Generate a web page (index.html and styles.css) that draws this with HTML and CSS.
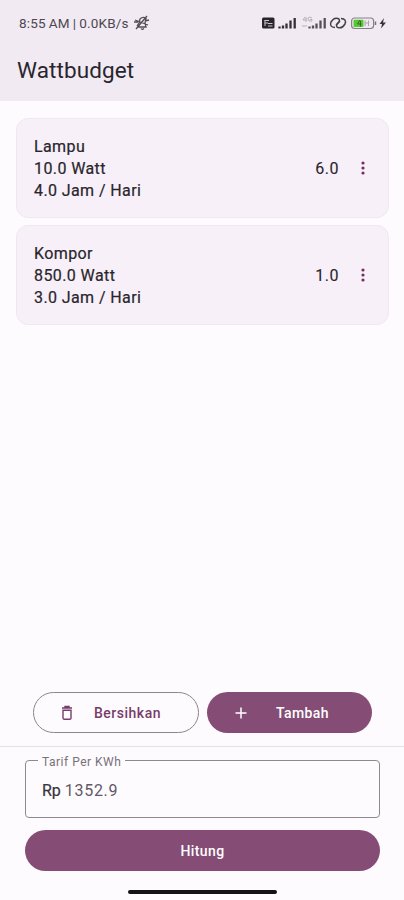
FILE: index.html
```html
<!DOCTYPE html>
<html lang="id">
<head>
<meta charset="utf-8">
<title>Wattbudget</title>
<link rel="stylesheet" href="styles.css">
</head>
<body>
<header class="top">
  <div class="status">
    <span class="clock">8:55 AM | 0.0KB/s</span>
    <svg class="mute" width="17" height="16" viewBox="0 0 17 16" fill="none" stroke="#514c55" stroke-width="1.300"><path d="M4 11L6 8L7 4Q10 1 13 3.500L12 8L13 12H5M8 13.500Q9 15 11 13.500M2 5L15 10M14 1L3 14M1 7H5M12 6L16 5"/></svg>
    <svg class="signals" width="126" height="16" viewBox="0 0 126 16">
      <rect x="0" y="2.500" width="12.500" height="11" rx="1.500" fill="#28252b"/>
      <path d="M2.500 5.500H7M2.500 8H6M3 5V11M6 8.500H10.500M6 11H10.500" stroke="#c9c3cb" fill="none"/>
      <path d="M17.500 13.500V11.500M21 13.500V10.500M24.500 13.500V8.500M28.500 13.500V5.500M32.700 13.500V3" stroke="#343038" stroke-width="2.300"/>
      <path d="M47.500 13.500V11.500M51 13.500V10.500M54.500 13.500V8.500M58.500 13.500V5.500M62.700 13.500V3" stroke="#56515a" stroke-width="2.300"/>
      <path d="M43 2L41 5H45M44 2V7M50 3Q46 1 46 4Q46 7 50 6V4.500H48M40 11H45" stroke="#b5afb8" fill="none"/>
      <g fill="none" stroke="#45414a" stroke-width="1.500"><path d="M73 12.500Q67 12 69 7Q72 2 76 3.500Q79 5 76 8L74 10"/><path d="M79 3.500Q85 4 83 9Q80 14 76 12.500Q73 11 76 8L78 6"/></g>
      <rect x="89.600" y="3" width="22" height="10.500" rx="3" fill="#eee8ef" stroke="#858087" stroke-width="1.200"/>
      <rect x="91.500" y="4.700" width="10" height="7.200" rx="1" fill="#55c932"/>
      <path d="M98 5L95.500 9H99.500M98.500 6V11.500" stroke="#356c2b" fill="none"/>
      <path d="M103 5.500V11M106.500 5.500V11M103 8H107" stroke="#aaa5ac" fill="none"/>
      <path d="M113.500 6.500V10" stroke="#77727a" stroke-width="1.500"/>
      <path d="M122 3L117.500 9H120L119 13.500L124 7.500H121Z" fill="#37333a"/>
    </svg>
  </div>
  <h1>Wattbudget</h1>
</header>
<main class="list">
  <article class="card">
    <div class="details"><div>Lampu</div><div>10.0 Watt</div><div>4.0 Jam / Hari</div></div>
    <span class="count">6.0</span>
    <svg class="more" width="4" height="16" viewBox="0 0 4 16" fill="#742e64"><circle cx="2" cy="3" r="1.600"/><circle cx="2" cy="8" r="1.600"/><circle cx="2" cy="13" r="1.600"/></svg>
  </article>
  <article class="card">
    <div class="details"><div>Kompor</div><div>850.0 Watt</div><div>3.0 Jam / Hari</div></div>
    <span class="count">1.0</span>
    <svg class="more" width="4" height="16" viewBox="0 0 4 16" fill="#742e64"><circle cx="2" cy="3" r="1.600"/><circle cx="2" cy="8" r="1.600"/><circle cx="2" cy="13" r="1.600"/></svg>
  </article>
</main>
<div class="actions">
  <button class="btn outlined">
    <svg width="12" height="16" viewBox="0 0 12 16" fill="none" stroke="#793c68" stroke-width="1.400"><path d="M1 3H11M4 2.800V1.500H8V2.800M2 5.200H10V13Q10 14.300 8.700 14.300H3.300Q2 14.300 2 13Z"/></svg>
    <span>Bersihkan</span>
  </button>
  <button class="btn filled">
    <svg width="12" height="12" viewBox="0 0 12 12" stroke="#fff" stroke-width="1.500"><path d="M0.500 6H11.500M6 0.500V11.500"/></svg>
    <span>Tambah</span>
  </button>
</div>
<section class="bottom">
  <fieldset class="field">
    <legend>Tarif Per KWh</legend>
    <div class="value"><span class="prefix">Rp</span><span class="amount">1352.9</span></div>
  </fieldset>
  <button class="calculate"><span>Hitung</span></button>
  <div class="handle"></div>
</section>
</body>
</html>
```
FILE: styles.css
```css
* { box-sizing: border-box; }
body {
  margin: 0;
  width: 404px;
  height: 900px;
  display: flex;
  flex-direction: column;
  overflow: hidden;
  background: #fefbff;
  color: #29252c;
  font-family: Roboto, sans-serif;
}
.top { height: 101px; background: #f1eaf3; }
.status { display: flex; align-items: center; height: 46px; padding-left: 19px; }
.clock { width: 112px; font-size: 13.500px; letter-spacing: 0.2px; word-spacing: -0.6px; color: #4d4851; white-space: nowrap; }
.mute { margin-left: 2px; }
.signals { margin-left: 112px; }
h1 { margin: 9px 0 0 17px; font-size: 22.500px; line-height: 30px; font-weight: 400; letter-spacing: 0.1px; }
.list { flex: 1; padding: 17px 15px 0 16px; }
.card {
  display: flex;
  align-items: center;
  height: 100px;
  margin-bottom: 7px;
  padding: 0 23px 0 17px;
  border: 1px solid #f0e8f0;
  border-radius: 12px;
  background: #f7f0f8;
}
.details {
  flex: 1;
  padding-top: 2px;
  font-size: 16px;
  line-height: 22px;
  letter-spacing: 0.4px;
  -webkit-text-stroke: 0.2px #29252c;
}
.count { font-size: 16px; letter-spacing: 0.5px; -webkit-text-stroke: 0.1px #29252c; }
.more { margin-left: 22px; }
.actions { display: flex; gap: 8px; padding: 0 32px 13px 33px; }
.btn, .calculate {
  height: 41px;
  border: 0;
  border-radius: 21px;
  background: #854d75;
  color: #fff;
  font: 500 14px Roboto, sans-serif;
}
.btn { display: flex; flex: 1 1 0; align-items: center; padding: 0; }
.outlined { flex: 0 0 166px; border: 1px solid #8c858c; background: transparent; color: #793c68; }
.outlined svg { margin-left: 27px; }
.outlined span { margin-left: 21px; letter-spacing: 0.5px; }
.filled svg { margin-left: 28px; }
.filled span { margin-left: 29px; letter-spacing: 0.4px; }
.bottom { height: 154px; padding: 6px 24px 0 25px; border-top: 1px solid #e5e1e6; }
.field {
  height: 65px;
  min-width: 0;
  margin: 0;
  padding: 0 0 0 12px;
  border: 1px solid #8e888f;
  border-radius: 4px;
}
legend { height: 14px; padding: 2px 4px 0; font-size: 12px; line-height: 14px; letter-spacing: 0.5px; color: #777078; }
.value { display: flex; gap: 4px; padding: 13px 0 0 4px; font-size: 16px; line-height: 22px; }
.prefix { color: #39343c; -webkit-text-stroke: 0.2px #39343c; }
.amount { color: #605962; letter-spacing: 0.7px; }
.calculate { display: block; width: 100%; margin-top: 12px; letter-spacing: 0.4px; }
.handle { width: 149px; height: 4px; margin: 19px auto 0 103px; border-radius: 2px; background: #151316; }
```
